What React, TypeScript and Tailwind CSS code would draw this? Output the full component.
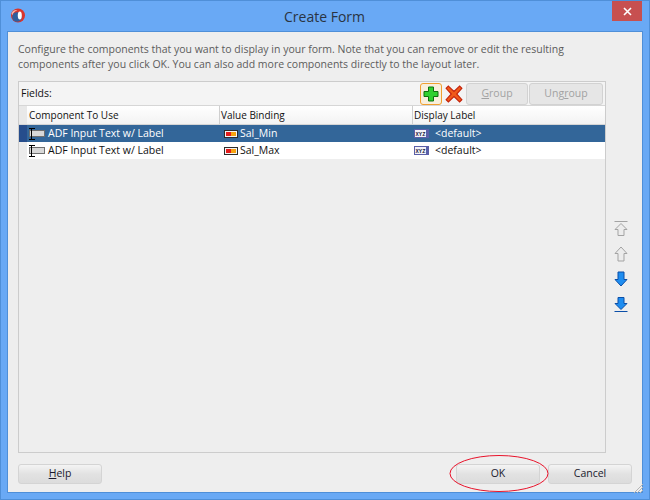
const FONT = "font-['Open_Sans','Liberation_Sans',sans-serif]";

function AppLogo() {
  return (
    <svg width="16" height="16" viewBox="0 0 16 16">
      <circle cx="8" cy="8.5" r="7" fill="#d9342b" />
      <path d="M1.5 6.5C2.5 3.5 5 2.5 7.5 3 5 4 3 6 2.4 8.5z" fill="#f3b3a8" />
      <ellipse cx="7" cy="10" rx="4.8" ry="4.8" fill="#2f5f9e" />
      <ellipse cx="9.8" cy="8.5" rx="2" ry="4" fill="#ffffff" />
    </svg>
  );
}

function InputTextIcon() {
  return (
    <svg width="17" height="14" viewBox="0 0 17 14" className="shrink-0" shapeRendering="crispEdges">
      <rect x="1.5" y="3.5" width="15" height="6" fill="#d8d8d8" stroke="#6f6f6f" />
      <path d="M0.5 1.5h6M0.5 12.5h6M3.5 1.5v11" stroke="#000000" strokeWidth="1" fill="none" />
    </svg>
  );
}

function BindingIcon() {
  return (
    <svg width="14" height="8" viewBox="0 0 14 8">
      <rect x="0.5" y="0.5" width="13" height="7" fill="#f4f4f4" stroke="#2c2c2c" />
      <rect x="2" y="2" width="5" height="4" fill="#e31b1b" />
      <rect x="7" y="2" width="5" height="4" fill="#f7a30f" />
    </svg>
  );
}

function LabelIcon() {
  return (
    <svg width="15" height="9" viewBox="0 0 15 9">
      <rect x="0" y="0" width="15" height="9" fill="#5a5fa8" />
      <rect x="1" y="1" width="11" height="7" fill="#f2f2f8" />
      <text x="1.5" y="6.6" fontSize="5.5" fontWeight="700" fill="#1c1c40" fontFamily="'Liberation Mono', monospace" textLength="10">
        XYZ
      </text>
    </svg>
  );
}

function ArrowIcon({ down, bar, active }: { down?: boolean; bar?: boolean; active?: boolean }) {
  const fill = active ? "#1e8df0" : "#ececec";
  const stroke = active ? "#0b4fa8" : "#a3a3a3";
  return (
    <svg width="14" height="16" viewBox="0 0 14 16" className={down ? "rotate-180" : ""}>
      {bar && <path d="M0.5 0.5h13" stroke={stroke} strokeWidth="1" />}
      <path
        d={bar ? "M7 2.5L13 8.5H10V14.5H4V8.5H1z" : "M7 1L13 7.5H10V15H4V7.5H1z"}
        fill={fill}
        stroke={stroke}
        strokeWidth="1"
        strokeLinejoin="round"
      />
    </svg>
  );
}

function FooterButton({ children }: { children: React.ReactNode }) {
  return (
    <button
      type="button"
      className="h-[20px] w-[84px] rounded-[3px] border border-[#d4d4d4] bg-gradient-to-b from-[#f4f4f4] via-[#e2e2e2] to-[#dcdcdc] pb-[1px] text-[10.5px] leading-none text-[#1a1a2e]"
    >
      {children}
    </button>
  );
}

function ToolButton({ children, width }: { children: React.ReactNode; width: string }) {
  return (
    <div className={`h-[22px] ${width} flex items-center justify-center rounded-[3px] border border-[#d2d2d2] bg-[#e6e6e6] text-[10.5px] text-[#a2a2a2]`}>
      {children}
    </div>
  );
}

const ROWS = ["Sal_Min", "Sal_Max"];

export default function App() {
  return (
    <div className={`${FONT} relative flex h-[500px] w-[650px] flex-col border border-[#4f8fd8] bg-[#69a9f5]`}>
      <div className="relative flex h-[30px] items-center justify-center">
        <div className="absolute left-[9px] top-[6px]">
          <AppLogo />
        </div>
        <span className="-ml-[1px] text-[14px] text-[#2a3442]">Create Form</span>
        <div className="absolute right-[7px] top-[0px] flex h-[20px] w-[30px] items-center justify-center bg-[#c75050]">
          <svg width="9" height="9" viewBox="0 0 9 9">
            <path d="M1 1l7 7M8 1l-7 7" stroke="#ffffff" strokeWidth="1.6" />
          </svg>
        </div>
      </div>

      <div className="mx-[6px] mb-[6px] flex flex-1 flex-col border border-[#4f8fd8] bg-[#eeeeee] pb-[8px] pl-[10px] pr-[10px] pt-[10px]">
        <p className="h-[30px] text-[10.5px] leading-[15px] text-[#5c5c5c]">
          Configure the components that you want to display in your form. Note that you can remove or edit the resulting
          <br />
          components after you click OK. You can also add more components directly to the layout later.
        </p>

        <div className="mt-[9px] flex flex-1">
          <div className="flex w-[588px] flex-col border border-[#cccccc]">
            <div className="flex h-[23px] items-center bg-[#f4f4f4]">
              <span className="ml-[2px] text-[10.5px] text-[#111111]">Fields:</span>
              <div className="ml-auto flex items-center gap-[1px] pr-[2px]">
                <div className="flex h-[22px] w-[22px] items-center justify-center rounded-[3px] border border-[#f0a030] bg-[#f8efdc]">
                  <svg width="16" height="16" viewBox="0 0 16 16">
                    <path d="M5.5 1h5v4.5H15v5h-4.5V15h-5v-4.5H1v-5h4.5z" fill="#2fd02f" stroke="#0e6f0e" strokeWidth="1" />
                  </svg>
                </div>
                <div className="flex h-[22px] w-[22px] items-center justify-center">
                  <svg width="18" height="18" viewBox="0 0 16 16">
                    <path d="M3 1l5 4.8L13 1l2 2-4.6 5 4.6 5-2 2-5-4.8L3 15l-2-2 4.6-5L1 3z" fill="#f05a1a" stroke="#c4210a" strokeWidth="1" />
                  </svg>
                </div>
                <ToolButton width="w-[62px]">
                  <span>
                    <span className="underline">G</span>roup
                  </span>
                </ToolButton>
                <ToolButton width="w-[74px]">
                  <span>
                    Ung<span className="underline">r</span>oup
                  </span>
                </ToolButton>
              </div>
            </div>

            <div className="flex h-[20px] border-t border-b border-[#d6d6d6] text-[10px] text-[#111111]">
              <div className="w-[8px] bg-[#e8e8e8]" />
              <div className="flex w-[192px] items-center bg-gradient-to-b from-white to-[#f3f3f3] pl-[2px]">
                Component To Use
              </div>
              <div className="flex w-[193px] items-center border-l border-[#cfcfcf] bg-gradient-to-b from-white to-[#f3f3f3] pl-[1px]">
                Value Binding
              </div>
              <div className="flex flex-1 items-center border-l border-[#cfcfcf] bg-gradient-to-b from-white to-[#f3f3f3] pl-[1px]">
                Display Label
              </div>
            </div>

            {ROWS.map((name, i) => {
              const selected = i === 0;
              return (
                <div
                  key={name}
                  className={`flex h-[17px] text-[10.5px] ${selected ? "bg-[#336699] text-white" : "bg-white text-[#111111]"}`}
                >
                  <div className={`w-[8px] ${selected ? "bg-[#264d8c]" : "bg-[#ececec]"}`} />
                  <div className="flex w-[192px] items-center gap-[3px] pl-[1px]">
                    <InputTextIcon />
                    <span>ADF Input Text w/ Label</span>
                  </div>
                  <div className="flex w-[193px] items-center gap-[2px] pl-[5px]">
                    <BindingIcon />
                    <span>{name}</span>
                  </div>
                  <div className="flex flex-1 items-center gap-[6px] pl-[2px]">
                    <LabelIcon />
                    <span>&lt;default&gt;</span>
                  </div>
                </div>
              );
            })}
          </div>

          <div className="ml-[3px] flex flex-1 flex-col items-center gap-[9px] pt-[140px]">
            <ArrowIcon bar />
            <ArrowIcon />
            <ArrowIcon down active />
            <ArrowIcon down bar active />
          </div>
        </div>

        <div className="mt-[11px] flex items-center">
          <FooterButton>
            <span className="underline">H</span>elp
          </FooterButton>
          <div className="ml-auto flex gap-[8px]">
            <FooterButton>OK</FooterButton>
            <FooterButton>Cancel</FooterButton>
          </div>
        </div>
      </div>

      <svg className="absolute left-[448px] top-[454px]" width="100" height="38" viewBox="0 0 100 38">
        <ellipse cx="50" cy="18.5" rx="49" ry="18" fill="none" stroke="#e8132b" strokeWidth="1" />
      </svg>
      <svg className="absolute left-[633px] top-[483px]" width="9" height="9" viewBox="0 0 9 9">
        <path d="M0 9L9 0M3 9l6-6M6 9l3-3" stroke="#b5b5b5" strokeWidth="1" />
      </svg>
    </div>
  );
}
